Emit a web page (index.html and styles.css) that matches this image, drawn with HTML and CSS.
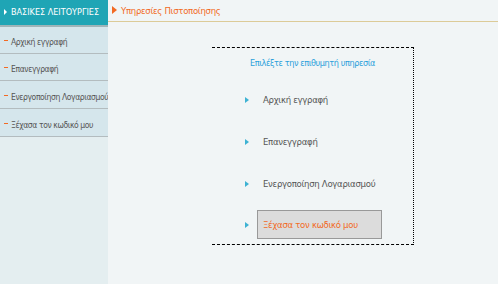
FILE: index.html
```html
<!DOCTYPE html>
<html lang="el">
<head>
    <meta charset="UTF-8">
    <meta name="viewport" content="width=device-width, initial-scale=1.0">
    <title>Υπηρεσίες Πιστοποίησης</title>
    <link rel="stylesheet" href="styles.css">
</head>
<body>
    <div class="page">
        <aside class="sidebar">
            <div class="side-head"><span class="head-arrow"></span>ΒΑΣΙΚΕΣ ΛΕΙΤΟΥΡΓΙΕΣ</div>
            <ul class="side-menu">
                <li><a href="#">Αρχική εγγραφή</a></li>
                <li><a href="#">Επανεγγραφή</a></li>
                <li><a href="#">Ενεργοποίηση Λογαριασμού</a></li>
                <li><a href="#">Ξέχασα τον κωδικό μου</a></li>
            </ul>
        </aside>
        <main class="content">
            <h1 class="title">Υπηρεσίες Πιστοποίησης</h1>
            <div class="box">
                <h2>Επιλέξτε την επιθυμητή υπηρεσία</h2>
                <ul class="services">
                    <li><a href="#">Αρχική εγγραφή</a></li>
                    <li><a href="#">Επανεγγραφή</a></li>
                    <li><a href="#">Ενεργοποίηση Λογαριασμού</a></li>
                    <li class="selected"><a href="#">Ξέχασα τον κωδικό μου</a></li>
                </ul>
            </div>
        </main>
    </div>
</body>
</html>
```

FILE: styles.css
```css
body {
    margin: 0;
    background-color: #fff;
    font-family: "DejaVu Sans Condensed", "Liberation Sans", sans-serif;
}
.page {
    display: flex;
    width: 498px;
    height: 284px;
}
.sidebar {
    width: 108px;
    flex-shrink: 0;
    background-color: #e4eef0;
    overflow: hidden;
}
.side-head {
    height: 25px;
    line-height: 25px;
    background-color: #1fa5b5;
    border-bottom: 2px solid #9fb4b8;
    color: #fff;
    font-size: 9px;
    padding-left: 4px;
    white-space: nowrap;
}
.head-arrow {
    display: inline-block;
    width: 0;
    height: 0;
    border-top: 3px solid transparent;
    border-bottom: 3px solid transparent;
    border-left: 3px solid #fff;
    margin-right: 4px;
}
.side-menu {
    list-style: none;
    margin: 0;
    padding: 0;
}
.side-menu li {
    height: 26px;
    line-height: 26px;
    background-color: #d5e6ec;
    border-bottom: 1px solid #b3bcbf;
    white-space: nowrap;
    overflow: hidden;
    padding-left: 4px;
}
.side-menu li:nth-child(n+3) {
    height: 27px;
    line-height: 27px;
}
.side-menu li::before {
    content: "";
    display: inline-block;
    width: 4px;
    height: 1px;
    background-color: #f26a24;
    vertical-align: middle;
    margin-right: 3px;
}
.side-menu a {
    color: #555;
    font-size: 8.5px;
    letter-spacing: -0.4px;
    text-decoration: none;
}
.content {
    flex: 1;
    background-color: #f1f5f6;
}
.title {
    margin: 0;
    height: 21px;
    line-height: 22px;
    border-bottom: 1px solid #dccb98;
    color: #f26a24;
    font-size: 9.5px;
    letter-spacing: -0.3px;
    font-weight: normal;
    padding-left: 4px;
}
.title::before {
    content: "";
    display: inline-block;
    width: 0;
    height: 0;
    border-top: 4px solid transparent;
    border-bottom: 4px solid transparent;
    border-left: 5px solid #f26a24;
    margin-right: 4px;
}
.box {
    width: 202px;
    height: 198px;
    margin: 25px 0 0 104px;
    border-top: 1px dashed #000;
    border-right: 1px dotted #000;
    border-bottom: 1px dashed #000;
    box-sizing: border-box;
}
.box h2 {
    margin: 10px 0 0;
    text-align: center;
    color: #2a9fdb;
    font-size: 9px;
    letter-spacing: -0.4px;
    font-weight: normal;
}
.services {
    list-style: none;
    margin: 17px 0 0;
    padding: 0 0 0 33px;
}
.services li {
    display: flex;
    align-items: center;
    height: 29px;
    margin-bottom: 13px;
}
.services li:nth-child(3) {
    margin-bottom: 12px;
}
.services li::before {
    content: "";
    width: 0;
    height: 0;
    border-top: 3px solid transparent;
    border-bottom: 3px solid transparent;
    border-left: 4px solid #3db2d3;
    margin-right: 8px;
}
.services a {
    color: #555;
    font-size: 9.5px;
    letter-spacing: -0.3px;
    text-decoration: none;
    padding-left: 6px;
}
.services li.selected a {
    display: block;
    width: 118px;
    height: 27px;
    line-height: 27px;
    padding-left: 5px;
    background-color: #dcdcdc;
    border: 1px solid #999;
    color: #f26a24;
}
```
